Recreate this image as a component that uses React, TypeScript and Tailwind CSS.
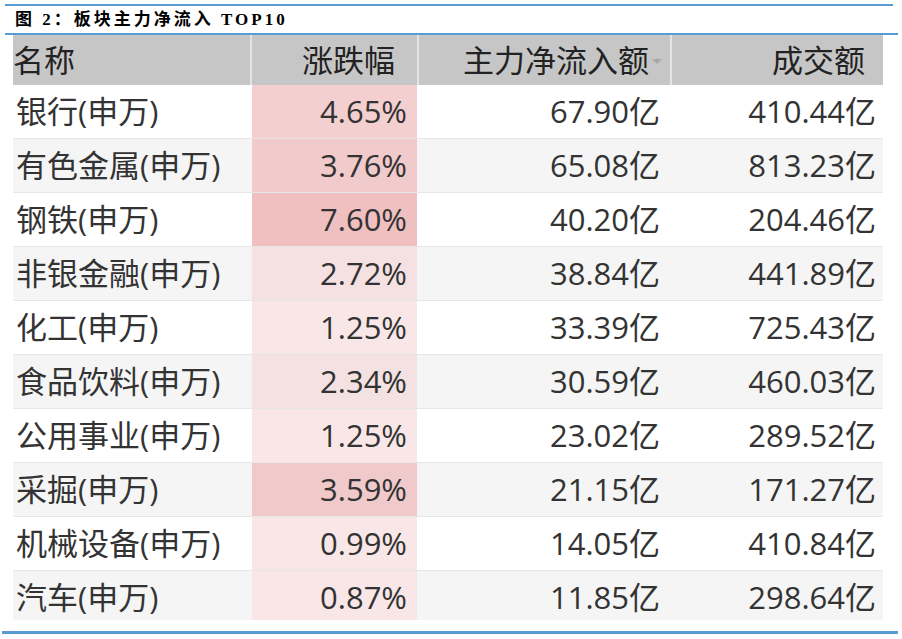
const rows = [
  { name: "银行(申万)", pct: "4.65%", flow: "67.90亿", vol: "410.44亿", bg: "bg-[#f4cfd0]" },
  { name: "有色金属(申万)", pct: "3.76%", flow: "65.08亿", vol: "813.23亿", bg: "bg-[#f1cacb]" },
  { name: "钢铁(申万)", pct: "7.60%", flow: "40.20亿", vol: "204.46亿", bg: "bg-[#f0bfc0]" },
  { name: "非银金融(申万)", pct: "2.72%", flow: "38.84亿", vol: "441.89亿", bg: "bg-[#f5e1e2]" },
  { name: "化工(申万)", pct: "1.25%", flow: "33.39亿", vol: "725.43亿", bg: "bg-[#f9e7e8]" },
  { name: "食品饮料(申万)", pct: "2.34%", flow: "30.59亿", vol: "460.03亿", bg: "bg-[#f4e1e2]" },
  { name: "公用事业(申万)", pct: "1.25%", flow: "23.02亿", vol: "289.52亿", bg: "bg-[#f9e7e8]" },
  { name: "采掘(申万)", pct: "3.59%", flow: "21.15亿", vol: "171.27亿", bg: "bg-[#f0c9cb]" },
  { name: "机械设备(申万)", pct: "0.99%", flow: "14.05亿", vol: "410.84亿", bg: "bg-[#f9e7e8]" },
  { name: "汽车(申万)", pct: "0.87%", flow: "11.85亿", vol: "298.64亿", bg: "bg-[#f9e7e8]" },
];

export default function App() {
  return (
    <div className="w-[902px] h-[639px] bg-white overflow-hidden">
      <div className="pt-[4px]">
        <div className="ml-[5px] w-[888px] h-[2px] bg-[#5b9bd5]" />
      </div>
      <div
        className="h-[27px] pl-[15px] flex items-center text-[17px] font-bold tracking-[3px] text-black"
        style={{ fontFamily: '"Liberation Serif", "Noto Sans CJK SC", serif' }}
      >
        图 2：板块主力净流入 TOP10
      </div>
      <div className="ml-[5px] w-[893px] h-[2px] bg-[#5b9bd5]" />

      <div
        className="ml-[13px] w-[870px] h-[585px] overflow-hidden text-[31px] leading-none text-[#333333]"
        style={{ fontFamily: '"Open Sans", "Noto Sans CJK SC", sans-serif' }}
      >
        <div className="grid grid-cols-[237px_167px_253px_213px] h-[50px] bg-[#c6c6c6] text-[#222222]">
          <div className="flex items-center">名称</div>
          <div className="flex items-center justify-end pr-[22px] border-l-2 border-[#e4e4e4]">涨跌幅</div>
          <div className="flex items-center justify-end pr-[8px] border-l-2 border-[#e4e4e4]">
            主力净流入额
            <span className="ml-[3px] mt-[2px] w-0 h-0 border-l-[5px] border-r-[5px] border-t-[5px] border-l-transparent border-r-transparent border-t-[#a8a8a8]" />
          </div>
          <div className="flex items-center justify-end pr-[18px] border-l-2 border-[#e4e4e4]">成交额</div>
        </div>

        {rows.map((r, i) => (
          <div
            key={r.name}
            className={`grid grid-cols-[237px_167px_253px_213px] h-[54px] border-b border-[#e6e6e6] ${
              i % 2 === 0 ? "bg-white" : "bg-[#f5f5f5]"
            }`}
          >
            <div className="flex items-center pl-[3px]">{r.name}</div>
            <div className="pl-[2px]">
              <div className={`h-full flex items-center justify-end pr-[10px] ${r.bg}`}>{r.pct}</div>
            </div>
            <div className="flex items-center justify-end pr-[10px]">{r.flow}</div>
            <div className="flex items-center justify-end pr-[7px]">{r.vol}</div>
          </div>
        ))}
      </div>

      <div className="mt-[11px] ml-[2px] w-[896px] h-[3px] bg-[#5b9bd5]" />
    </div>
  );
}
